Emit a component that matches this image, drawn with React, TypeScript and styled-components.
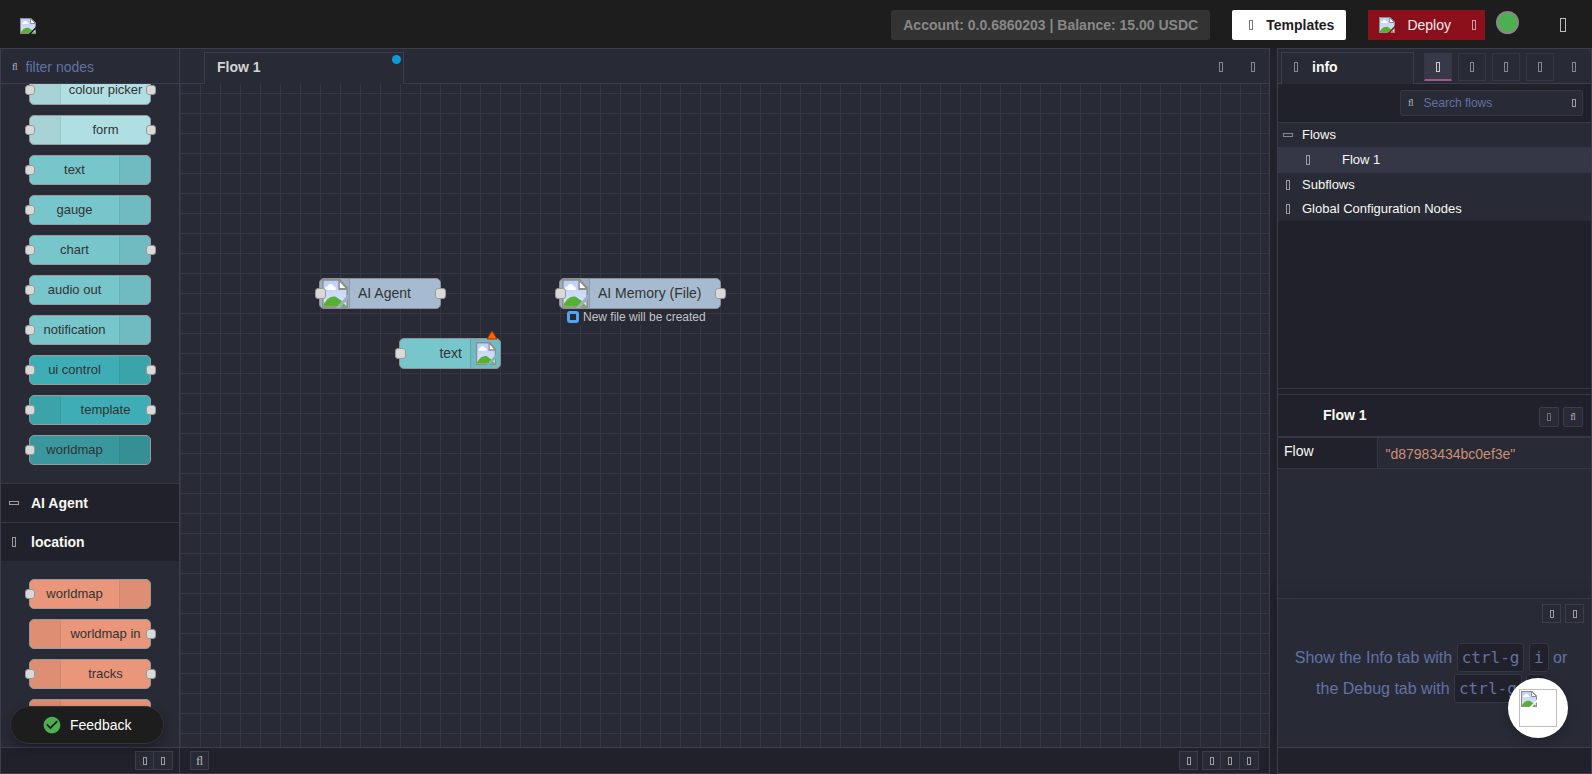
import React from 'react';
import styled, { createGlobalStyle, css } from 'styled-components';

const c = {
  bg: '#282a36',
  dark: '#21212b',
  header: '#1d1d1d',
  line: '#3b3d4d',
  soft: '#353746',
  text: '#f8f8f2',
  muted: '#6272a4',
  glyph: '#9c9ca0',
  dim: '#85868e',
  ligature: '#b4b4b6',
};

const sans = `"Liberation Sans", Arial, sans-serif`;
const serif = `"Liberation Serif", serif`;

const GlobalStyle = createGlobalStyle`
  * { box-sizing: border-box; }
  html, body, #root { height: 100%; }
  body {
    margin: 0;
    background: ${c.dark};
    color: ${c.text};
    font: 14px/20px ${sans};
    overflow: hidden;
  }
  button, input { font: inherit; color: inherit; margin: 0; }
  button { cursor: pointer; }
`;

/* ---------- icons ---------- */

const IconBase = styled.svg`
  display: block;
  flex: none;
`;

type BoxSize = 'small' | 'medium' | 'large';
const boxes: Record<BoxSize, [number, number]> = {
  small: [4, 8],
  medium: [4, 10],
  large: [6, 14],
};

function Glyph({ size = 'medium', flat = false, color = c.glyph }: { size?: BoxSize; flat?: boolean; color?: string }) {
  const [a, b] = boxes[size];
  const w = flat ? b : a;
  const h = flat ? a : b;
  return (
    <IconBase width={w} height={h} viewBox={`0 0 ${w} ${h}`} aria-hidden="true">
      <rect x=".5" y=".5" width={w - 1} height={h - 1} fill="none" stroke={color} />
    </IconBase>
  );
}

function Picture({ width = 16, height = 16 }: { width?: number; height?: number }) {
  return (
    <IconBase width={width} height={height} viewBox="0 0 16 16" preserveAspectRatio="none" role="img" aria-label="image">
      <defs>
        <linearGradient id="sky" x1="0" y1="0" x2="0" y2="1">
          <stop offset="0" stopColor="#bdcff8" />
          <stop offset="1" stopColor="#dbe5fa" />
        </linearGradient>
        <clipPath id="page">
          <path d="M0 0H11.200L16 4.800V8.500L8.500 16H0ZM16 11V16H11Z" />
        </clipPath>
      </defs>
      <g clipPath="url(#page)">
        <rect width="16" height="16" fill="#8e8e8e" />
        <path d="M1 1H10.500L15 5.500V15H1Z" fill="url(#sky)" />
        <path d="M2.200 6A1.400 1.400 0 0 1 3.400 4.200 2 2 0 0 1 7.200 4.200 1.400 1.400 0 0 1 8.400 6Z" fill="#fff" />
        <path d="M1 15V14C3 10.800 5.500 9.300 8.500 9.800L12 12L15 15Z" fill="#58b030" />
        <path d="M10.500 .5V5.500H15.500Z" fill="#fff" stroke="#8e8e8e" />
      </g>
    </IconBase>
  );
}

function CheckCircle() {
  return (
    <IconBase width="20" height="20" viewBox="0 0 24 24" aria-hidden="true">
      <path
        fill="#4caf50"
        d="M12 2C6.480 2 2 6.480 2 12s4.480 10 10 10 10-4.480 10-10S17.520 2 12 2zm-2 15l-5-5 1.410-1.410L10 14.170l7.590-7.590L19 8l-9 9z"
      />
    </IconBase>
  );
}

/* ---------- header ---------- */

const Page = styled.div`
  display: flex;
  flex-direction: column;
  height: 100vh;
`;

const Header = styled.header`
  display: flex;
  align-items: center;
  flex: none;
  height: 48px;
  padding: 0 26px 0 20px;
  background: ${c.header};
`;

const Logo = styled.a`
  margin: 4px auto 0 0;
`;

const Account = styled.div`
  padding: 5px 12px;
  border-radius: 3px;
  background: #333;
  color: #888;
  font-weight: bold;
  margin: 2px 22px 0 0;
`;

const HeaderButton = styled.button<{ $kind: 'light' | 'red' }>`
  display: flex;
  align-items: center;
  height: 30px;
  margin-top: 2px;
  border: 0;
  ${(p) =>
    p.$kind === 'light'
      ? css`
          gap: 13px;
          padding: 0 12px 0 17px;
          margin-right: 22px;
          border-radius: 2px;
          background: #fff;
          color: #1d1d1d;
          font-weight: bold;
        `
      : css`
          gap: 12px;
          padding: 0 9px 0 11px;
          margin-right: 11px;
          background: #8c101c;
          color: #eee;
        `}
`;

const DeployLabel = styled.span`
  margin-right: 9px;
`;

const UserButton = styled.button`
  width: 23px;
  height: 23px;
  padding: 0;
  margin-right: 41px;
  margin-bottom: 4px;
  border: 2px solid #888;
  border-radius: 50%;
  background: #4caf50;
`;

const MenuButton = styled.button`
  padding: 0;
  margin-top: 2px;
  border: 0;
  background: none;
`;

/* ---------- shared panel parts ---------- */

const Main = styled.div`
  display: flex;
  flex: 1;
  min-height: 0;
`;

const Bar = styled.div`
  display: flex;
  flex: none;
  height: 35px;
  border-bottom: 1px solid ${c.line};
  background: ${c.bg};
`;

const Footer = styled.footer<{ $spread?: boolean }>`
  display: flex;
  align-items: center;
  flex: none;
  height: 26px;
  padding: 0 ${(p) => (p.$spread ? 10 : 6)}px 0 ${(p) => (p.$spread ? 10 : 0)}px;
  justify-content: ${(p) => (p.$spread ? 'flex-start' : 'flex-end')};
  border-top: 1px solid ${c.line};
  background: ${c.dark};
`;

const ButtonGroup = styled.div<{ $push?: boolean }>`
  display: flex;
  margin-left: ${(p) => (p.$push ? 'auto' : '4px')};
`;

const SmallButton = styled.button<{ $round?: boolean }>`
  display: flex;
  align-items: center;
  justify-content: center;
  width: ${(p) => (p.$round ? 20 : 19)}px;
  height: ${(p) => (p.$round ? 20 : 19)}px;
  padding: 0;
  border: 1px solid ${c.line};
  border-radius: ${(p) => (p.$round ? 2 : 0)}px;
  background: ${c.bg};
  color: ${c.ligature};
  font-family: ${serif};
  font-size: ${(p) => (p.$round ? 10 : 13)}px;
  line-height: 16px;

  ${ButtonGroup} & + & {
    border-left: 0;
  }
`;

const PlainButton = styled.button`
  display: flex;
  align-items: center;
  justify-content: center;
  width: 32px;
  height: 100%;
  padding: 0;
  border: 0;
  background: none;
`;

/* ---------- palette ---------- */

const Palette = styled.aside`
  display: flex;
  flex-direction: column;
  flex: none;
  width: 180px;
  border: 1px solid ${c.line};
  background: ${c.bg};
`;

const Filter = styled.label`
  display: flex;
  align-items: center;
  flex: 1;
  min-width: 0;
  gap: 8px;
  padding: 2px 0 0 11px;
  color: ${c.ligature};
  font-family: ${serif};
  font-size: 10px;
`;

const FilterInput = styled.input`
  flex: 1;
  min-width: 0;
  padding: 0;
  border: 0;
  outline: 0;
  background: none;
  font: 14px/20px ${sans};
  &::placeholder { color: ${c.muted}; opacity: 1; }
`;

const PaletteScroll = styled.div`
  display: flex;
  flex-direction: column;
  flex: 1;
  min-height: 0;
  overflow: hidden;
`;

const NodeList = styled.div<{ $end?: boolean }>`
  display: flex;
  flex-direction: column;
  flex: ${(p) => (p.$end ? '0 0 399px' : '1 0 auto')};
  min-height: 0;
  justify-content: ${(p) => (p.$end ? 'flex-end' : 'flex-start')};
  gap: 10px;
  padding: ${(p) => (p.$end ? 0 : 18)}px 28px 18px;
  overflow: hidden;
`;

const Category = styled.button`
  display: flex;
  align-items: center;
  flex: none;
  height: 39px;
  padding: 0 0 0 6px;
  border: 0;
  border-top: 1px solid ${c.soft};
  background: ${c.dark};
  color: ${c.text};
  font-weight: bold;
`;

const Arrow = styled.span`
  display: flex;
  justify-content: center;
  width: 14px;
  margin-right: 10px;
`;

type Side = 'left' | 'right';

const Chip = styled.div<{ $color: string; $side: Side }>`
  position: relative;
  display: flex;
  flex: none;
  flex-direction: ${(p) => (p.$side === 'left' ? 'row' : 'row-reverse')};
  height: 30px;
  border: 1px solid #999;
  border-radius: 5px;
  background: ${(p) => p.$color};
  color: #333;
  font-size: 13px;
  line-height: 28px;
`;

const ChipIcon = styled.div<{ $side: Side }>`
  width: 31px;
  background: rgba(0, 0, 0, 0.05);
  border: 0 solid rgba(0, 0, 0, 0.05);
  border-width: ${(p) => (p.$side === 'left' ? '0 1px 0 0' : '0 0 0 1px')};
`;

const ChipLabel = styled.div`
  flex: 1;
  text-align: center;
  white-space: nowrap;
`;

const Port = styled.span<{ $side: Side; $large?: boolean }>`
  position: absolute;
  top: 9px;
  ${(p) => (p.$side === 'left' ? 'left: -5px' : 'right: -6px')};
  width: ${(p) => (p.$large ? 11 : 10)}px;
  height: ${(p) => (p.$large ? 11 : 10)}px;
  border: 1px solid #999;
  border-radius: 3px;
  background: #d9d9d9;
`;

type PaletteItem = { label: string; color: string; icon: Side; input?: boolean; output?: boolean };

const dashboard: PaletteItem[] = [
  { label: 'colour picker', color: '#b0dfe3', icon: 'left', input: true, output: true },
  { label: 'form', color: '#b0dfe3', icon: 'left', input: true, output: true },
  { label: 'text', color: '#77c6cc', icon: 'right', input: true },
  { label: 'gauge', color: '#77c6cc', icon: 'right', input: true },
  { label: 'chart', color: '#77c6cc', icon: 'right', input: true, output: true },
  { label: 'audio out', color: '#77c6cc', icon: 'right', input: true },
  { label: 'notification', color: '#77c6cc', icon: 'right', input: true },
  { label: 'ui control', color: '#3fadb5', icon: 'right', input: true, output: true },
  { label: 'template', color: '#3fadb5', icon: 'left', input: true, output: true },
  { label: 'worldmap', color: '#39979d', icon: 'right', input: true },
];

const location: PaletteItem[] = [
  { label: 'worldmap', color: '#e9967a', icon: 'right', input: true },
  { label: 'worldmap in', color: '#e9967a', icon: 'left', output: true },
  { label: 'tracks', color: '#e9967a', icon: 'left', input: true, output: true },
  { label: '', color: '#e9967a', icon: 'left' },
];

function PaletteNode({ label, color, icon, input, output }: PaletteItem) {
  return (
    <Chip $color={color} $side={icon}>
      <ChipIcon $side={icon} />
      <ChipLabel>{label}</ChipLabel>
      {input && <Port $side="left" />}
      {output && <Port $side="right" />}
    </Chip>
  );
}

const Feedback = styled.button`
  position: absolute;
  left: 10px;
  bottom: 30px;
  display: flex;
  align-items: center;
  gap: 8px;
  height: 38px;
  padding: 0 32px 0 31px;
  border: 1px solid #333;
  border-radius: 19px;
  background: ${c.header};
  color: #fff;
  box-shadow: 0 4px 12px rgba(0, 0, 0, 0.3);
`;

/* ---------- workspace ---------- */

const Workspace = styled.main`
  display: flex;
  flex-direction: column;
  flex: 1;
  min-width: 0;
  border: 1px solid ${c.line};
  border-left: 0;
  background: ${c.bg};
`;

const FlowTabs = styled(Bar)`
  padding-left: 24px;
`;

const Tab = styled.div<{ $wide?: boolean }>`
  position: relative;
  display: flex;
  align-items: center;
  width: ${(p) => (p.$wide ? 200 : 133)}px;
  height: 32px;
  margin-top: 3px;
  padding: 0 0 4px 12px;
  border: 1px solid ${c.line};
  border-bottom: 0;
  background: ${c.bg};
  color: ${(p) => (p.$wide ? '#d4d4d2' : c.text)};
  font-weight: bold;
`;

const ChangedDot = styled.span`
  position: absolute;
  top: 2px;
  right: 2px;
  width: 9px;
  height: 9px;
  border-radius: 50%;
  background: #0c9bd8;
`;

const TabActions = styled.div`
  display: flex;
  margin-left: auto;
  padding-top: 2px;
`;

const Canvas = styled.div`
  position: relative;
  flex: 1;
  min-height: 0;
  overflow: hidden;
  background-image: linear-gradient(${c.soft} 1px, transparent 1px), linear-gradient(90deg, ${c.soft} 1px, transparent 1px);
  background-size: 20px 20px;
  background-position: 0 9px;
`;

const FlowNode = styled.div<{ $x: number; $y: number; $w: number; $color: string; $side: Side }>`
  position: absolute;
  left: ${(p) => p.$x}px;
  top: ${(p) => p.$y}px;
  width: ${(p) => p.$w}px;
  height: 31px;
  display: flex;
  flex-direction: ${(p) => (p.$side === 'left' ? 'row' : 'row-reverse')};
  border: 1px solid #8f9295;
  border-radius: 5px;
  background: ${(p) => p.$color};
  color: #333;
  line-height: 29px;
`;

const FlowIcon = styled.div<{ $side: Side }>`
  display: flex;
  align-items: center;
  justify-content: center;
  width: 30px;
  background: rgba(0, 0, 0, 0.05);
  border: 0 solid rgba(0, 0, 0, 0.12);
  border-width: ${(p) => (p.$side === 'left' ? '0 1px 0 0' : '0 0 0 1px')};
`;

const FlowLabel = styled.span`
  padding: 0 8px;
`;

const Status = styled.div`
  position: absolute;
  left: 387px;
  top: 225px;
  display: flex;
  align-items: center;
  gap: 4px;
  height: 16px;
  background: ${c.bg};
  color: #c4c4c4;
  font-size: 12px;
`;

const StatusMark = styled.span`
  width: 12px;
  height: 12px;
  border: 3px solid #53a3f3;
  border-radius: 3px;
`;

const Warning = styled(IconBase)`
  position: absolute;
  top: -9px;
  right: 2px;
`;

/* ---------- sidebar ---------- */

const Sidebar = styled.aside`
  display: flex;
  flex-direction: column;
  flex: none;
  width: 315px;
  margin-left: 7px;
  border: 1px solid ${c.line};
  background: ${c.bg};
`;

const SideTabs = styled(Bar)`
  padding-left: 3px;
`;

const InfoTab = styled(Tab)`
  gap: 14px;
`;

const TabButtons = styled.div`
  display: flex;
  align-items: center;
  gap: 6px;
  margin-left: auto;
  padding-top: 2px;
`;

const TabButton = styled.button<{ $active?: boolean }>`
  display: flex;
  align-items: center;
  justify-content: center;
  width: 28px;
  height: 28px;
  padding: 0;
  border: 1px solid ${c.soft};
  background: ${c.bg};
  ${(p) =>
    p.$active &&
    css`
      background: #373848;
      border-bottom: 2px solid #a5558a;
    `}
`;

const MoreButton = styled(PlainButton)`
  width: 28px;
  margin-right: 3px;
`;

const SearchRow = styled.div`
  display: flex;
  justify-content: flex-end;
  flex: none;
  height: 39px;
  padding: 6px 8px;
  border-bottom: 1px solid ${c.soft};
  background: ${c.dark};
`;

const SearchBox = styled.label`
  display: flex;
  align-items: center;
  width: 183px;
  height: 26px;
  padding: 0 6px 0 7px;
  gap: 10px;
  border: 1px solid ${c.soft};
  border-radius: 3px;
  background: ${c.bg};
  color: ${c.ligature};
  font-family: ${serif};
  font-size: 10px;
`;

const SearchInput = styled(FilterInput)`
  font-size: 12px;
`;

const Outline = styled.div`
  flex: none;
  height: 266px;
  border-bottom: 1px solid ${c.soft};
  background: ${c.dark};
`;

const TreeRow = styled.div<{ $active?: boolean }>`
  display: flex;
  align-items: center;
  height: ${(p) => (p.$active ? 26 : 24)}px;
  padding-left: ${(p) => (p.$active ? 23 : 3)}px;
  background: ${(p) => (p.$active ? '#353746' : c.bg)};
  font-size: 13px;
`;

const TreeIcon = styled(Arrow)<{ $far?: boolean }>`
  margin-right: ${(p) => (p.$far ? 27 : 7)}px;
`;

const Splitter = styled.div`
  flex: none;
  height: 6px;
  border-bottom: 1px solid ${c.soft};
  background: ${c.dark};
`;

const InfoHeader = styled.div`
  display: flex;
  align-items: center;
  flex: none;
  height: 43px;
  padding: 2px 8px 0 45px;
  gap: 4px;
  border-bottom: 2px solid ${c.soft};
  background: ${c.dark};
`;

const InfoTitle = styled.h2`
  flex: 1;
  margin: 0 0 4px;
  font-size: 14px;
`;

const Properties = styled.table`
  flex: none;
  width: 100%;
  border-collapse: collapse;
  border-bottom: 1px solid ${c.soft};
`;

const PropName = styled.th`
  width: 99px;
  height: 30px;
  padding: 0 6px 4px;
  border-right: 1px solid ${c.soft};
  background: ${c.dark};
  font-weight: normal;
  text-align: left;
`;

const PropValue = styled.td`
  padding: 2px 8px 0;
  color: #ce8f74;
`;

const Tips = styled.section`
  flex: none;
  height: 149px;
  margin-top: auto;
  padding: 5px 7px;
  border-top: 1px solid ${c.soft};
  box-shadow: 0 -4px 16px rgba(0, 0, 0, 0.12);
`;

const TipButtons = styled.div`
  display: flex;
  justify-content: flex-end;
  gap: 4px;
`;

const TipText = styled.p`
  margin: 19px 14px 0 7px;
  color: ${c.muted};
  font-size: 16px;
  line-height: 31px;
  text-align: center;
`;

const Key = styled.kbd`
  padding: 4px;
  border: 1px solid ${c.soft};
  border-radius: 3px;
  background: ${c.dark};
  font: 16px/20px "DejaVu Sans Mono", monospace;
  white-space: nowrap;
`;

const Chat = styled.button`
  position: absolute;
  right: 24px;
  bottom: 36px;
  display: flex;
  align-items: center;
  justify-content: center;
  width: 60px;
  height: 60px;
  padding: 0;
  border: 0;
  border-radius: 50%;
  background: #fff;
  box-shadow: 0 4px 12px rgba(0, 0, 0, 0.2);
`;

const ChatImage = styled.span`
  width: 38px;
  height: 38px;
  padding: 1px;
  border: 1px solid #c0c0c0;
`;

export default function App() {
  return (
    <>
      <GlobalStyle />
      <Page>
        <Header>
          <Logo href="#" aria-label="Home"><Picture /></Logo>
          <Account>Account: 0.0.6860203 | Balance: 15.00 USDC</Account>
          <HeaderButton $kind="light"><Glyph color="#777" />Templates</HeaderButton>
          <HeaderButton $kind="red">
            <Picture />
            <DeployLabel>Deploy</DeployLabel>
            <Glyph color="#c9a0a4" />
          </HeaderButton>
          <UserButton aria-label="User" />
          <MenuButton aria-label="Menu"><Glyph size="large" color="#bbb" /></MenuButton>
        </Header>

        <Main>
          <Palette>
            <Bar>
              <Filter>
                ﬂ
                <FilterInput type="text" placeholder="filter nodes" aria-label="filter nodes" />
              </Filter>
            </Bar>
            <PaletteScroll>
              <NodeList $end>
                {dashboard.map((n) => <PaletteNode key={n.label} {...n} />)}
              </NodeList>
              <Category><Arrow><Glyph flat /></Arrow>AI Agent</Category>
              <Category><Arrow><Glyph /></Arrow>location</Category>
              <NodeList>
                {location.map((n) => <PaletteNode key={n.label} {...n} />)}
              </NodeList>
            </PaletteScroll>
            <Footer>
              <ButtonGroup>
                <SmallButton aria-label="Collapse all"><Glyph size="small" /></SmallButton>
                <SmallButton aria-label="Expand all"><Glyph size="small" /></SmallButton>
              </ButtonGroup>
            </Footer>
          </Palette>

          <Workspace>
            <FlowTabs>
              <Tab $wide>Flow 1<ChangedDot /></Tab>
              <TabActions>
                <PlainButton aria-label="Add flow"><Glyph color={c.dim} /></PlainButton>
                <PlainButton aria-label="List flows"><Glyph color={c.dim} /></PlainButton>
              </TabActions>
            </FlowTabs>
            <Canvas>
              <FlowNode $x={139} $y={194} $w={122} $color="#a6bbcf" $side="left">
                <FlowIcon $side="left"><Picture width={26} height={29} /></FlowIcon>
                <FlowLabel>AI Agent</FlowLabel>
                <Port $large $side="left" /><Port $large $side="right" />
              </FlowNode>
              <FlowNode $x={379} $y={194} $w={162} $color="#a6bbcf" $side="left">
                <FlowIcon $side="left"><Picture width={26} height={29} /></FlowIcon>
                <FlowLabel>AI Memory (File)</FlowLabel>
                <Port $large $side="left" /><Port $large $side="right" />
              </FlowNode>
              <Status><StatusMark />New file will be created</Status>
              <FlowNode $x={219} $y={254} $w={102} $color="#77c6cc" $side="right">
                <FlowIcon $side="right"><Picture width={20} height={23} /></FlowIcon>
                <FlowLabel>text</FlowLabel>
                <Port $large $side="left" />
                <Warning width="12" height="10" viewBox="0 0 12 10" aria-label="Invalid">
                  <path d="M6 1L11 9H1Z" fill="#ff6600" stroke="#c02a00" />
                </Warning>
              </FlowNode>
            </Canvas>
            <Footer $spread>
              <SmallButton aria-label="Search flows">ﬂ</SmallButton>
              <ButtonGroup $push>
                <SmallButton aria-label="Toggle navigator"><Glyph size="small" /></SmallButton>
              </ButtonGroup>
              <ButtonGroup>
                <SmallButton aria-label="Zoom out"><Glyph size="small" /></SmallButton>
                <SmallButton aria-label="Reset zoom"><Glyph size="small" /></SmallButton>
                <SmallButton aria-label="Zoom in"><Glyph size="small" /></SmallButton>
              </ButtonGroup>
            </Footer>
          </Workspace>

          <Sidebar>
            <SideTabs>
              <InfoTab><Glyph color={c.dim} />info</InfoTab>
              <TabButtons>
                <TabButton $active aria-label="Information"><Glyph color="#ccc" /></TabButton>
                <TabButton aria-label="Help"><Glyph color={c.dim} /></TabButton>
                <TabButton aria-label="Debug"><Glyph color={c.dim} /></TabButton>
                <TabButton aria-label="Configuration"><Glyph color={c.dim} /></TabButton>
                <MoreButton aria-label="More"><Glyph color={c.dim} /></MoreButton>
              </TabButtons>
            </SideTabs>
            <SearchRow>
              <SearchBox>
                ﬂ
                <SearchInput type="text" placeholder="Search flows" aria-label="Search flows" />
                <Glyph size="small" />
              </SearchBox>
            </SearchRow>
            <Outline>
              <TreeRow><TreeIcon><Glyph flat color={c.dim} /></TreeIcon>Flows</TreeRow>
              <TreeRow $active><TreeIcon $far><Glyph /></TreeIcon>Flow 1</TreeRow>
              <TreeRow><TreeIcon><Glyph /></TreeIcon>Subflows</TreeRow>
              <TreeRow><TreeIcon><Glyph /></TreeIcon>Global Configuration Nodes</TreeRow>
            </Outline>
            <Splitter />
            <InfoHeader>
              <InfoTitle>Flow 1</InfoTitle>
              <SmallButton $round aria-label="Copy link"><Glyph size="small" color="#6c6c74" /></SmallButton>
              <SmallButton $round aria-label="Find in workspace">ﬂ</SmallButton>
            </InfoHeader>
            <Properties>
              <tbody>
                <tr>
                  <PropName scope="row">Flow</PropName>
                  <PropValue>"d87983434bc0ef3e"</PropValue>
                </tr>
              </tbody>
            </Properties>
            <Tips>
              <TipButtons>
                <SmallButton aria-label="Next tip"><Glyph size="small" /></SmallButton>
                <SmallButton aria-label="Close tips"><Glyph size="small" /></SmallButton>
              </TipButtons>
              <TipText>
                Show the Info tab with <Key>ctrl-g</Key> <Key>i</Key> or the Debug tab with <Key>ctrl-g</Key> <Key>d</Key>
              </TipText>
            </Tips>
            <Footer />
          </Sidebar>
        </Main>
      </Page>
      <Feedback><CheckCircle />Feedback</Feedback>
      <Chat aria-label="Open chat"><ChatImage><Picture /></ChatImage></Chat>
    </>
  );
}
